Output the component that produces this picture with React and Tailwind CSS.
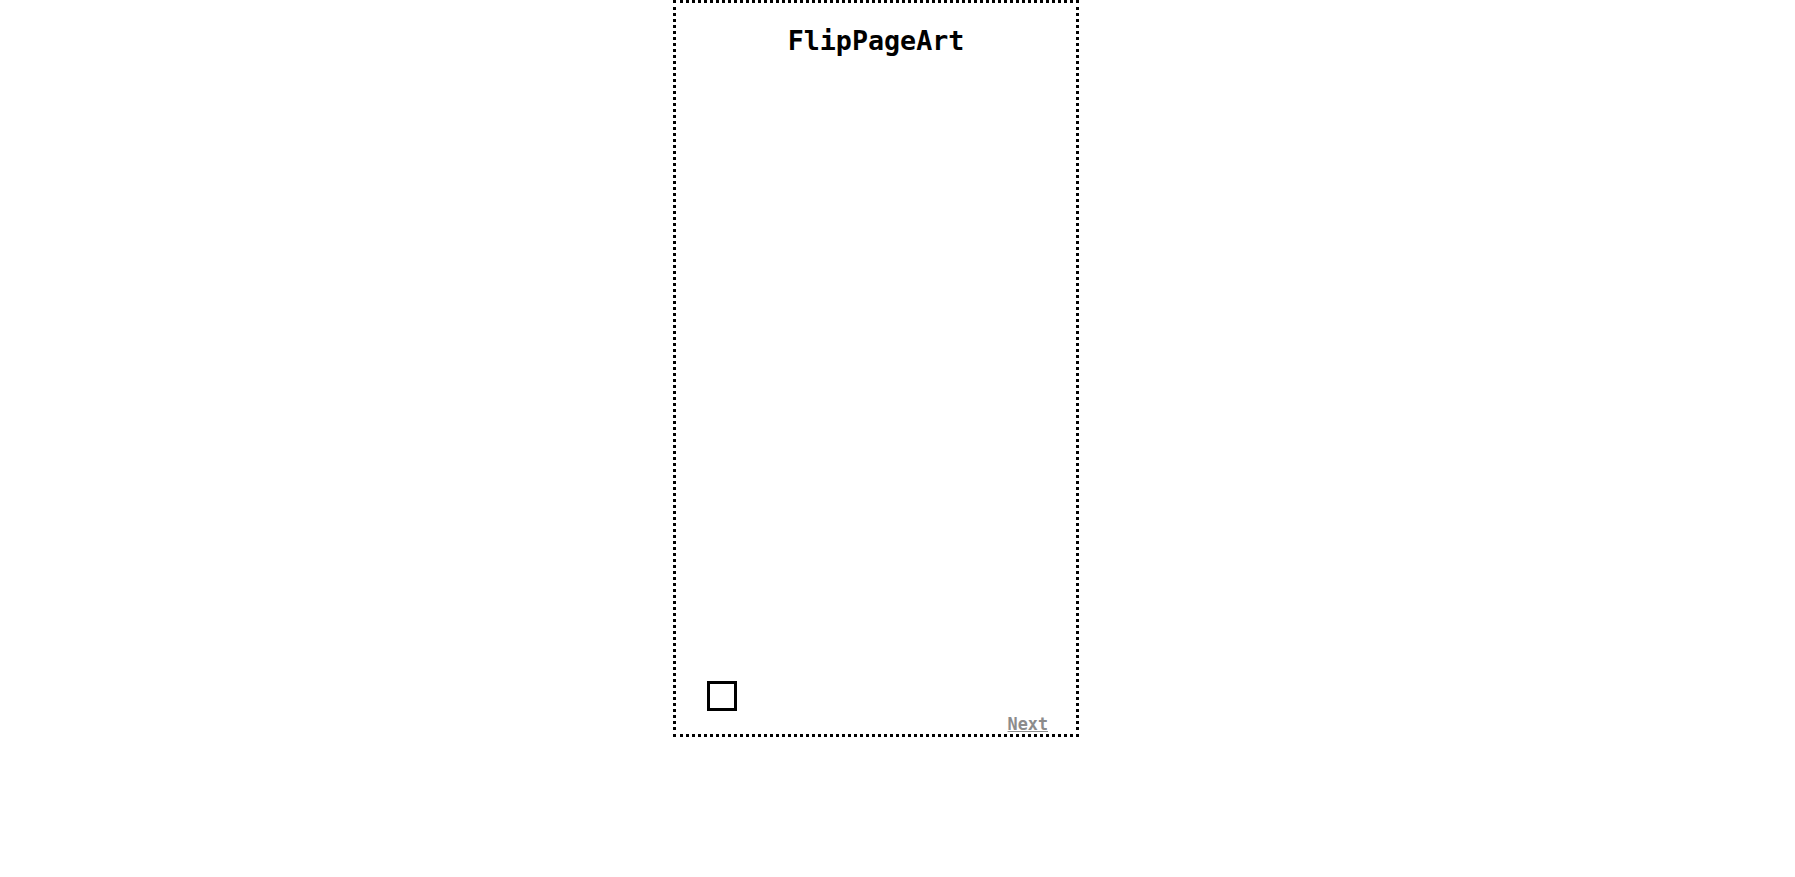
import React from "react";

const mono = { fontFamily: '"DejaVu Sans Mono", monospace' };

export default function App() {
  return (
    <div className="min-h-screen bg-white" style={mono}>
      <div className="ml-[673px] w-[406px] h-[737px] border-[3px] border-dotted border-black flex flex-col">
        <h1 className="pt-[22px] text-center text-[26.7px] font-bold leading-[normal] text-black">
          FlipPageArt
        </h1>
        <div className="flex-1" />
        <div className="ml-[31px] w-[30px] h-[30px] border-[3px] border-black" />
        <a
          href="#"
          className="self-end mr-[28px] mt-[3px] text-[16.8px] font-bold leading-[normal] text-[#8c8c8c] underline"
        >
          Next
        </a>
      </div>
    </div>
  );
}
